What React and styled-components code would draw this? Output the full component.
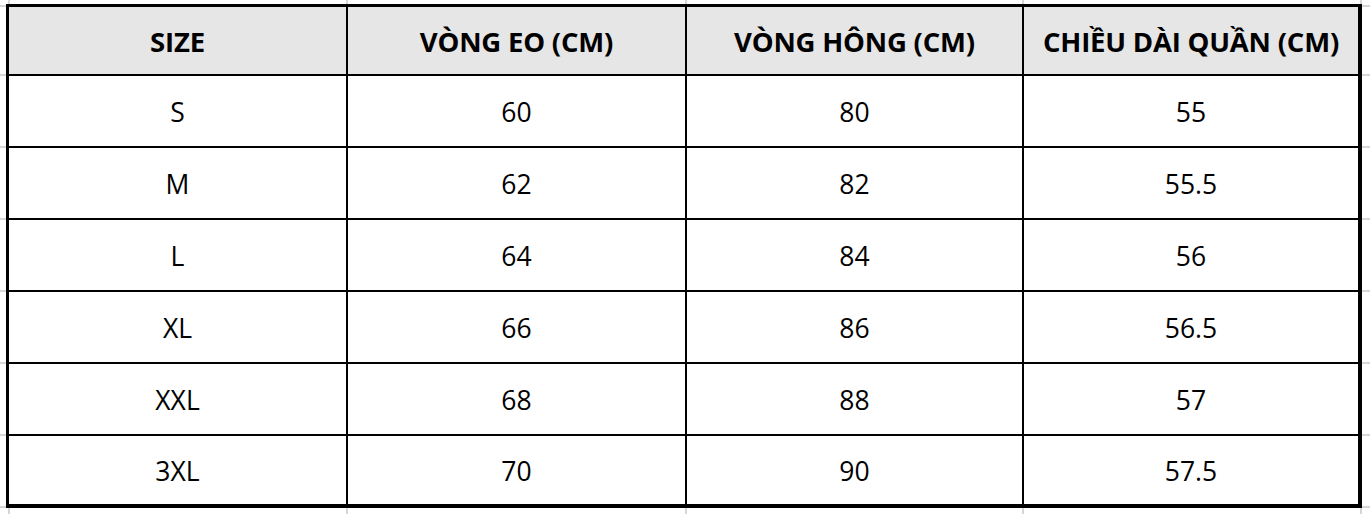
import React from "react";
import styled, { createGlobalStyle } from "styled-components";

const GlobalStyle = createGlobalStyle`
  html, body {
    margin: 0;
    padding: 0;
    background: #ffffff;
  }
  body {
    font-family: "Open Sans", "Noto Sans", "Liberation Sans", sans-serif;
    color: #000000;
  }
`;

const GRID = "#d6d6d6";
const hLines = [5, 74, 146, 218, 290, 362, 434, 506];
const vLines = [8, 346, 685, 1022, 1360];

const gridBackground = [
  ...hLines.map(
    (y) =>
      `linear-gradient(to bottom, transparent ${y}px, ${GRID} ${y}px, ${GRID} ${y + 2}px, transparent ${y + 2}px)`
  ),
  ...vLines.map(
    (x) =>
      `linear-gradient(to right, transparent ${x}px, ${GRID} ${x}px, ${GRID} ${x + 2}px, transparent ${x + 2}px)`
  ),
].join(", ");

const Sheet = styled.div`
  width: 1370px;
  height: 514px;
  box-sizing: border-box;
  padding: 4px 0 0 6px;
  background-color: #ffffff;
  background-image: ${gridBackground};
`;

const Table = styled.div`
  display: grid;
  width: 1356px;
  box-sizing: border-box;
  grid-template-columns: 337px 337px 335px 334px;
  grid-template-rows: 67px repeat(5, 70px) 68px;
  gap: 2px;
  background: #000000;
  border-style: solid;
  border-color: #000000;
  border-width: 3px 4px 4px 3px;
`;

const Cell = styled.div`
  display: flex;
  align-items: center;
  justify-content: center;
  background: ${(p) => (p.$head ? "#e6e6e6" : "#ffffff")};
  font-size: ${(p) => (p.$head ? "27.5px" : "26.5px")};
  font-weight: ${(p) => (p.$head ? 700 : 400)};
  letter-spacing: ${(p) => (p.$head ? "-0.2px" : "0")};
  padding-top: 3px;
  white-space: nowrap;
  line-height: 1;
`;

const headers = ["SIZE", "VÒNG EO (CM)", "VÒNG HÔNG (CM)", "CHIỀU DÀI QUẦN (CM)"];
const rows = [
  ["S", "60", "80", "55"],
  ["M", "62", "82", "55.5"],
  ["L", "64", "84", "56"],
  ["XL", "66", "86", "56.5"],
  ["XXL", "68", "88", "57"],
  ["3XL", "70", "90", "57.5"],
];

export default function App() {
  return (
    <>
      <GlobalStyle />
      <Sheet>
        <Table>
          {headers.map((h) => (
            <Cell key={h} $head>
              {h}
            </Cell>
          ))}
          {rows.map((r) =>
            r.map((v, i) => <Cell key={r[0] + i}>{v}</Cell>)
          )}
        </Table>
      </Sheet>
    </>
  );
}
